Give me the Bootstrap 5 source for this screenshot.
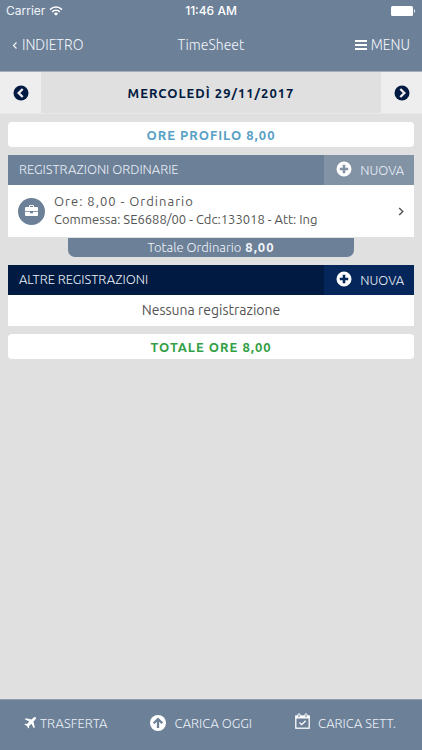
<!DOCTYPE html>
<html lang="it">
<head>
<meta charset="utf-8">
<meta name="viewport" content="width=device-width, initial-scale=1">
<title>TimeSheet</title>
<link href="https://cdn.jsdelivr.net/npm/bootstrap@5.3.0/dist/css/bootstrap.min.css" rel="stylesheet">
<style>
:root{--slate:#6c8098;--navy:#001a41}
body{font-family:Ubuntu,"Open Sans","Noto Sans",sans-serif;font-size:13px;line-height:20px;font-weight:300;background:#e0e0e0;color:#555}
svg{display:block;flex:none}
.bg-slate{background:var(--slate)}
.bg-navy{background:var(--navy)}
.text-navy{color:var(--navy)}
.btn-flat{border:0;padding:0;background:none;color:inherit;font-weight:inherit}
a{color:inherit;text-decoration:none}
.app-head{border-bottom:1px solid #a4afbd;color:#f1f5fa}
.status{font-family:Inter,sans-serif;font-size:12px;font-weight:400;height:22px;padding:0 6px}
.clock{font-weight:500;color:#fff}
.toolbar{height:49px;padding:0 12px 3px;font-size:14px}
.toolbar h1{font-size:14px;font-weight:300}
.date-bar{height:42px;border-bottom:1px solid #e8e8e8}
.date-bar button{width:41px;background:#eee}
.date-bar h2{font-size:13px;padding-top:2px}
.spaced{font-weight:700;letter-spacing:1px}
.summary{height:25px;border-radius:4px;background:#fff}
.blue{color:#58a0c4}
.green{color:#329f45}
.section-head{height:30px;color:#e8eef6}
.section-head h3{font-size:13px;font-weight:300;padding-left:11px}
.section-head button{width:90px;padding:0 10px 0 12px;background:#8293a6}
.section-head button svg{margin-bottom:3px}
.section-head.bg-navy button{background:#05265a}
.entry{height:52px;padding:0 9px 0 10px;background:#fff}
.entry-icon{width:27px;height:27px;margin-right:9px}
.entry-copy{padding-bottom:2px;font-weight:400;line-height:18px}
.entry-title{letter-spacing:1px}
.total-tab{height:19px;margin:1px 60px 0;padding-bottom:2px;border-radius:0 0 7px 7px;color:#f1f5fa}
.empty{height:31px;padding-bottom:2px;background:#fff;font-size:14px;font-weight:400}
.app-foot{height:51px;border-top:1px solid #8c9aac;color:#e8eef6;padding:0 26px 4px 24px}
</style>
<script src="https://cdn.jsdelivr.net/npm/bootstrap@5.3.0/dist/js/bootstrap.bundle.min.js"></script>
</head>
<body class="d-flex flex-column min-vh-100">
<svg class="d-none" aria-hidden="true">
 <symbol id="plus" viewBox="0 0 16 16"><path fill="currentColor" fill-rule="evenodd" d="M8 .5a7.500 7.500 0 1 0 0 15 7.500 7.500 0 0 0 0-15zM6.700 3.800h2.600v2.900h2.900v2.600H9.300v2.900H6.700V9.300H3.800V6.700h2.900z"/></symbol>
 <symbol id="chev" viewBox="0 0 8 10"><path d="M2 1l4 4-4 4" fill="none" stroke="currentColor" stroke-width="1.600"/></symbol>
 <symbol id="circle-chev" viewBox="0 0 16 16"><circle cx="8" cy="8" r="7.500" fill="currentColor"/><path d="M6.300 4l4 4-4 4" fill="none" stroke="#eee" stroke-width="2.400"/></symbol>
</svg>
<header class="app-head bg-slate">
 <div class="status d-flex align-items-center position-relative">
  <span class="d-flex align-items-center gap-1">Carrier
   <svg width="14" height="10" viewBox="0 0 14 10" fill="none" stroke="#fff" stroke-width="1.500" aria-hidden="true"><path d="M1 3.600a8.500 8.500 0 0 1 12 0M3.200 5.900a5.400 5.400 0 0 1 7.600 0"/><path d="M4.900 7.600a3 3 0 0 1 4.200 0L7 9.800z" fill="#fff" stroke="none"/></svg>
  </span>
  <span class="clock position-absolute start-50 translate-middle-x">11:46 AM</span>
  <svg class="ms-auto" width="25" height="10" viewBox="0 0 25 10" fill="#fff" aria-hidden="true"><rect width="22" height="10" rx="1.500"/><path d="M23 3q2 2 0 4z"/></svg>
 </div>
 <nav class="toolbar d-flex align-items-center justify-content-between position-relative" aria-label="Principale">
  <a href="#" class="d-flex align-items-center"><svg class="me-1" width="6" height="9" aria-hidden="true" transform="scale(-1 1)"><use href="#chev"/></svg>INDIETRO</a>
  <h1 class="position-absolute start-50 translate-middle-x m-0">TimeSheet</h1>
  <button type="button" class="btn-flat d-flex align-items-center gap-1"><svg width="12" height="11" fill="#fff" aria-hidden="true"><rect width="12" height="2"/><rect y="4" width="12" height="2"/><rect y="8" width="12" height="2"/></svg>MENU</button>
 </nav>
</header>
<div class="date-bar d-flex text-navy">
 <button type="button" class="btn-flat d-flex align-items-center justify-content-center" aria-label="Giorno precedente"><svg width="16" height="16" transform="scale(-1 1)"><use href="#circle-chev"/></svg></button>
 <h2 class="flex-fill text-center align-self-center spaced m-0">MERCOLEDÌ 29/11/2017</h2>
 <button type="button" class="btn-flat d-flex align-items-center justify-content-center" aria-label="Giorno successivo"><svg width="16" height="16"><use href="#circle-chev"/></svg></button>
</div>
<main class="flex-fill d-flex flex-column gap-2 p-2">
 <div class="summary d-flex align-items-center justify-content-center spaced blue">ORE PROFILO 8,00</div>
 <section>
  <div class="section-head bg-slate d-flex align-items-stretch">
   <h3 class="flex-fill align-self-center m-0">REGISTRAZIONI ORDINARIE</h3>
   <button type="button" class="btn-flat d-flex align-items-center justify-content-between"><svg class="text-white" width="16" height="16" aria-hidden="true"><use href="#plus"/></svg>NUOVA</button>
  </div>
  <a href="#" class="entry d-flex align-items-center">
   <span class="entry-icon bg-slate rounded-circle d-flex align-items-center justify-content-center"><svg width="13" height="12" viewBox="0 0 13 12" fill="#fff" aria-hidden="true"><path fill-rule="evenodd" d="M4 2V1q0-1 1-1h3q1 0 1 1v1h3q1 0 1 1v3H0V3q0-1 1-1zM5 1v1h3V1z"/><path d="M0 6.800h5v1.500h3V6.800h5V10q0 1-1 1H1q-1 0-1-1z"/></svg></span>
   <span class="entry-copy flex-fill"><span class="entry-title d-block">Ore: 8,00 - Ordinario</span><span class="d-block">Commessa: SE6688/00 - Cdc:133018 - Att: Ing</span></span>
   <svg width="8" height="9" aria-hidden="true"><use href="#chev"/></svg>
  </a>
  <div class="total-tab bg-slate d-flex align-items-center justify-content-center gap-1"><span>Totale Ordinario</span><strong class="spaced">8,00</strong></div>
 </section>
 <section>
  <div class="section-head bg-navy d-flex align-items-stretch">
   <h3 class="flex-fill align-self-center m-0">ALTRE REGISTRAZIONI</h3>
   <button type="button" class="btn-flat d-flex align-items-center justify-content-between"><svg class="text-white" width="16" height="16" aria-hidden="true"><use href="#plus"/></svg>NUOVA</button>
  </div>
  <div class="empty d-flex align-items-center justify-content-center">Nessuna registrazione</div>
 </section>
 <div class="summary d-flex align-items-center justify-content-center spaced green">TOTALE ORE 8,00</div>
</main>
<footer class="app-foot bg-slate d-flex align-items-center justify-content-between">
 <button type="button" class="btn-flat d-flex align-items-center gap-1"><svg width="12" height="12" viewBox="0 0 12 12" fill="#fff" aria-hidden="true"><path d="M11.700.3c.6.600.1 1.800-.7 2.600L9.400 4.500l1.400 5.700-1 1L7.400 6.700 5 8.900l.2 1.900-.8.800L3 9 .4 7.600l.8-.8 1.900.2L5.300 4.600.8 2.200l1-1 5.700 1.400L9.100 1c.8-.8 2-1.300 2.600-.7z"/></svg>TRASFERTA</button>
 <button type="button" class="btn-flat d-flex align-items-center gap-2"><svg width="16" height="16" viewBox="0 0 16 16" aria-hidden="true"><circle cx="8" cy="8" r="8" fill="#fff"/><path d="M8 13V4.500M3.700 8.200L8 4l4.300 4.200" fill="none" stroke="#6c8098" stroke-width="2.300"/></svg>CARICA OGGI</button>
 <button type="button" class="btn-flat d-flex align-items-center gap-2"><svg class="mb-1" width="15" height="16" viewBox="0 0 15 16" fill="none" stroke="#fff" aria-hidden="true"><path d="M1 5V3.500h13V5z" fill="#fff"/><rect x=".8" y="3" width="13.400" height="12.200" stroke-width="1.300"/><path d="M4.500 9.500l2.200 2.200 4-4" stroke-width="1.300"/><rect x="3" y=".7" width="2" height="4" rx="1" fill="#6c8098"/><rect x="10" y=".7" width="2" height="4" rx="1" fill="#6c8098"/></svg>CARICA SETT.</button>
</footer>
</body>
</html>
